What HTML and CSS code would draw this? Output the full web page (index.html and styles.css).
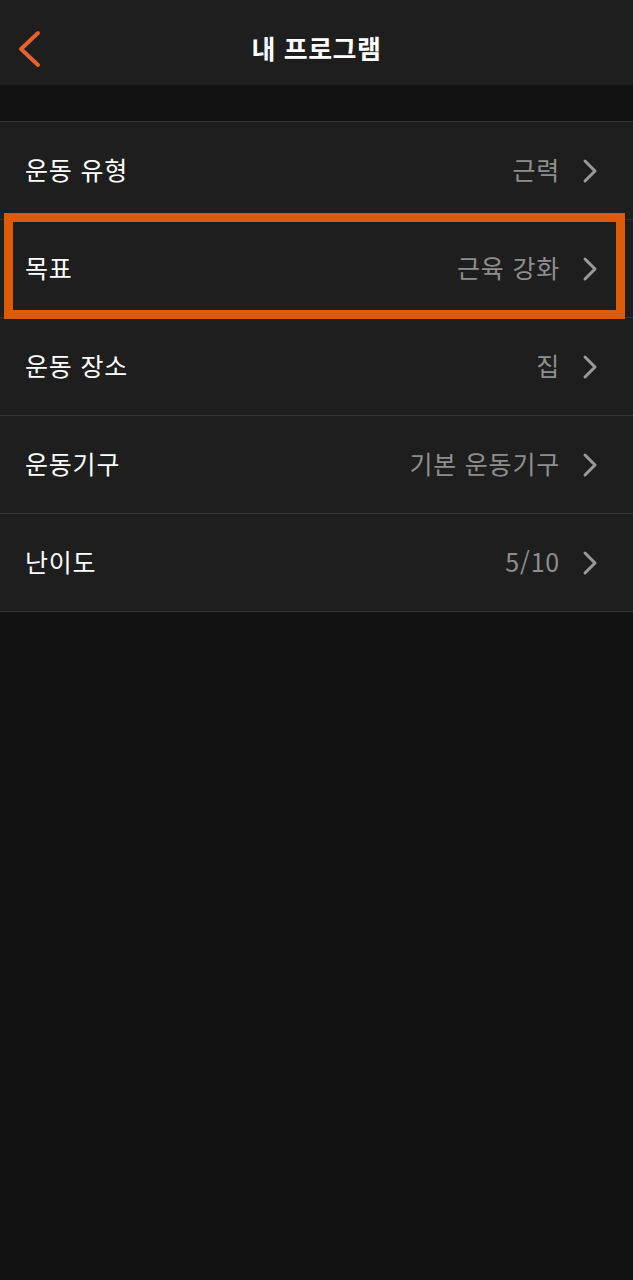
FILE: index.html
```html
<!DOCTYPE html>
<html lang="ko">
<head>
  <meta charset="UTF-8" />
  <title>내 프로그램</title>
  <meta name="viewport" content="width=device-width, initial-scale=1.0" />
  <link rel="stylesheet" href="styles.css">
</head>
<body>
<div class="topbar">
  <span class="back">
    <svg width="28" height="40" viewBox="0 0 28 40"><path d="M24 3 L7 19 L24 35" fill="none" stroke="#e8602c" stroke-width="4" stroke-linecap="round" stroke-linejoin="round"/></svg>
  </span>
  <h1>내 프로그램</h1>
</div>

<div class="spacer"></div>

<ul class="list">
  <li class="item"><span class="label">운동 유형</span><span class="value">근력</span><svg class="chev" width="16" height="26" viewBox="0 0 16 26"><path d="M3 3 L13 13 L3 23" fill="none" stroke="#9a9a9a" stroke-width="3" stroke-linecap="round" stroke-linejoin="round"/></svg></li>
  <li class="item"><span class="label">목표</span><span class="value">근육 강화</span><svg class="chev" width="16" height="26" viewBox="0 0 16 26"><path d="M3 3 L13 13 L3 23" fill="none" stroke="#9a9a9a" stroke-width="3" stroke-linecap="round" stroke-linejoin="round"/></svg></li>
  <li class="item"><span class="label">운동 장소</span><span class="value">집</span><svg class="chev" width="16" height="26" viewBox="0 0 16 26"><path d="M3 3 L13 13 L3 23" fill="none" stroke="#9a9a9a" stroke-width="3" stroke-linecap="round" stroke-linejoin="round"/></svg></li>
  <li class="item"><span class="label">운동기구</span><span class="value">기본 운동기구</span><svg class="chev" width="16" height="26" viewBox="0 0 16 26"><path d="M3 3 L13 13 L3 23" fill="none" stroke="#9a9a9a" stroke-width="3" stroke-linecap="round" stroke-linejoin="round"/></svg></li>
  <li class="item"><span class="label">난이도</span><span class="value">5/10</span><svg class="chev" width="16" height="26" viewBox="0 0 16 26"><path d="M3 3 L13 13 L3 23" fill="none" stroke="#9a9a9a" stroke-width="3" stroke-linecap="round" stroke-linejoin="round"/></svg></li>
</ul>

<div class="highlight"></div>
</body>
</html>
```

FILE: styles.css
```css
body {
  margin: 0;
  background: #121212;
  font-family: "Noto Sans CJK KR", "Noto Sans", sans-serif;
  color: #fff;
}
.topbar {
  height: 85px;
  background: #1e1e1e;
  display: flex;
  align-items: center;
  justify-content: center;
  position: relative;
}
.back {
  position: absolute;
  left: 14px;
  top: 30px;
  display: flex;
}
.topbar h1 {
  margin: 0;
  font-size: 26px;
  font-weight: 700;
  letter-spacing: 0.5px;
  padding-top: 10px;
}
.spacer {
  height: 36px;
}
.list {
  list-style: none;
  margin: 0;
  padding: 0;
  background: #1e1e1e;
  border-top: 1px solid #333;
}
.item {
  height: 97px;
  border-bottom: 1px solid #333;
  display: flex;
  align-items: center;
  padding: 0 35px 0 25px;
  font-size: 25px;
  letter-spacing: 0.8px;
}
.label {
  flex: 1;
  color: #fff;
  padding-bottom: 3px;
}
.value {
  color: #8e8e8e;
  padding-bottom: 3px;
  margin-right: -1px;
}
.chev {
  margin-left: 23px;
  display: block;
}
.highlight {
  position: absolute;
  left: 4px;
  top: 213px;
  width: 603px;
  height: 88px;
  border: 9px solid #dd5a06;
}
```
